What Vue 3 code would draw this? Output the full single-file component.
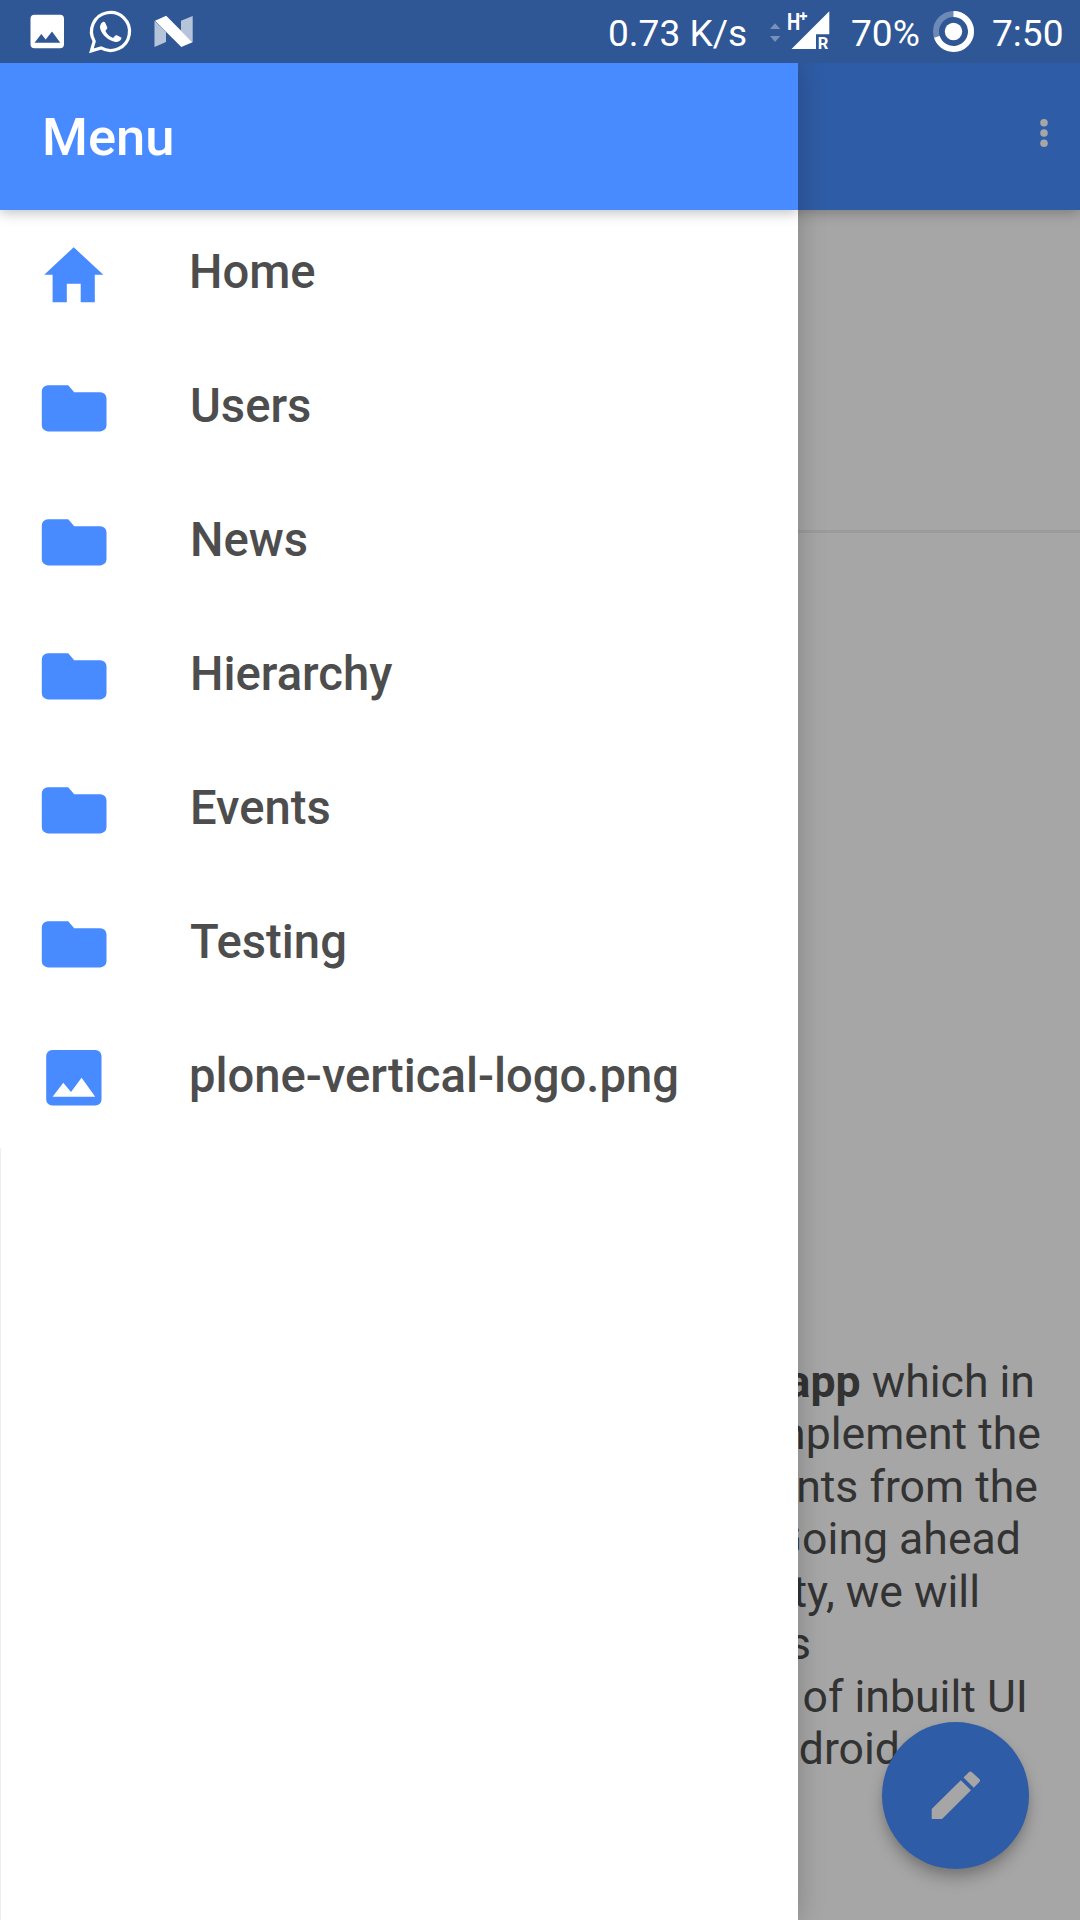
<script setup>
const items = [
  { label: 'Home', icon: 'home' },
  { label: 'Users', icon: 'folder' },
  { label: 'News', icon: 'folder' },
  { label: 'Hierarchy', icon: 'folder' },
  { label: 'Events', icon: 'folder' },
  { label: 'Testing', icon: 'folder' },
  { label: 'plone-vertical-logo.png', icon: 'image' },
]

// Each line ends at its own measured width.
const lines = [
  { strong: 'app', text: ' which in', end: 1035 },
  { text: 'mplement the', end: 1041 },
  { text: 'nts from the', end: 1038 },
  { text: 'Going ahead', end: 1021 },
  { text: 'ty, we will', end: 980 },
  { text: 's', end: 811 },
  { text: 'of inbuilt UI', end: 1028 },
  { text: 'droid', end: 900 },
]
</script>

<template>
  <div class="screen">
    <div class="status">
      <svg width="608" height="63" viewBox="0 0 608 63" fill="#fff">
        <path fill-rule="evenodd" d="M34.5 14.7H60a4 4 0 0 1 4 4V44.3a4 4 0 0 1-4 4H34.5a4 4 0 0 1-4-4V18.7a4 4 0 0 1 4-4ZM34.5 42.7H60.3L52 31.5L45.7 39.5L41.3 34Z" />
        <path d="M94.2 41.2A19 19 0 1 1 101 47.9L91.4 50.8Z" fill="none" stroke="#fff" stroke-width="3.2" />
        <path d="M102.5 22.2c1-.6 2.2-.4 2.7.6l2 4.5c.3.8-.1 1.5-.7 2.2l-1.1 1.4c1.6 3.3 4.2 5.6 7.7 7.1l2-2.3c.5-.6 1.1-.7 1.8-.4l3.8 1.9c.7.4.9.8.7 1.6-.7 2.2-3.5 3.4-6 3.1-6.8-.9-13.3-7-15.1-12.9-.8-2.8 0-5.2 2.2-6.8Z" />
        <path opacity=".65" d="M154.5 20.8L166 32V42L154.5 47ZM181 20.8L192.7 16V42.3L181 31Z" />
        <path d="M155 20.8L166.2 15.8L192.5 42.2L181.3 47Z" />
      </svg>
      <span class="speed">0.73 K/s</span>
      <svg width="83" height="63" viewBox="767 0 83 63" fill="#fff">
        <path opacity=".35" d="M770 29L775 23.3L780.3 29ZM770 36H780.3L775 42Z" />
        <path d="M791.5 49L829.3 11.3V34.3H816V49Z" />
        <text x="787" y="30" font-size="24.5" font-weight="700" textLength="13.2" lengthAdjust="spacingAndGlyphs">H</text>
        <path d="M799.5 15H802.3V12.2H804.5V15H807.2V17.3H804.5V20.1H802.3V17.3H799.5Z" />
        <text x="817.8" y="49" font-size="16.5" font-weight="700">R</text>
      </svg>
      <span>70%</span>
      <svg width="58" height="63" viewBox="932 0 58 63">
        <circle cx="953.5" cy="31.5" r="17.5" fill="none" stroke="#fff" stroke-opacity=".3" stroke-width="6" />
        <path d="M953.5 14A17.5 17.5 0 1 1 936.86 36.9" fill="none" stroke="#fff" stroke-width="6" />
        <circle cx="953.5" cy="31.5" r="8.7" fill="#fff" />
      </svg>
      <span class="clock">7:50</span>
    </div>

    <div class="body">
      <main class="page">
        <header class="toolbar">
          <svg width="12" height="34" viewBox="0 0 12 34" fill="#a6a6a6">
            <circle cx="6" cy="6.7" r="3.8" /><circle cx="6" cy="17" r="3.8" /><circle cx="6" cy="27.2" r="3.8" />
          </svg>
        </header>
        <div class="hero"></div>
        <article class="copy">
          <p v-for="(line, i) in lines" :key="i" :style="{ width: line.end + 'px' }"><span><b v-if="line.strong">{{ line.strong }}</b>{{ line.text }}</span></p>
        </article>
      </main>

      <button class="fab">
        <svg width="147" height="147" viewBox="882 1722 147 147" fill="#a6a6a6">
          <path d="M931.7 1819V1809L960.8 1780.3L971 1790.3L942 1819ZM963.5 1777.5L968.8 1772.2Q970.3 1770.8 972 1772.2L979.3 1779Q980.8 1780.4 979.3 1782L973.8 1787.7Z" />
        </svg>
      </button>

      <aside class="drawer">
        <h1>Menu</h1>
        <nav>
          <a v-for="item in items" :key="item.label" :class="item.icon">
            <svg width="182" height="134" viewBox="0 0 182 134" fill="#488aff">
              <path v-if="item.icon === 'home'" d="M73.7 37.2L103.3 64.8H94.8V92.3H80.7V73.7H66.8V92.3H52.6V64.8H44.2Z" />
              <path v-else-if="item.icon === 'folder'" d="M48 41.2H68.2L74.2 48.2H100.3a6.2 6.2 0 0 1 6.2 6.2V81.2a6.2 6.2 0 0 1-6.2 6.2H48a6.2 6.2 0 0 1-6.2-6.2V47.4a6.2 6.2 0 0 1 6.2-6.2Z" />
              <path v-else fill-rule="evenodd" d="M52.2 36H95.5a6 6 0 0 1 6 6V85.6a6 6 0 0 1-6 6H52.2a6 6 0 0 1-6-6V42a6 6 0 0 1 6-6ZM52.6 82.7H95.2L81.6 63.7L71 78L63.3 68.7Z" />
            </svg>
            <span>{{ item.label }}</span>
          </a>
        </nav>
        <div class="rest"></div>
      </aside>
    </div>
  </div>
</template>

<style>
body { margin: 0; }
</style>

<style scoped>
.screen {
  width: 1080px;
  height: 1920px;
  overflow: hidden;
  display: flex;
  flex-direction: column;
  font-family: Roboto, "Liberation Sans", sans-serif;
}
.status {
  height: 63px;
  flex: none;
  display: grid;
  grid-template-columns: 608px 159px 84px 81px 60px 1fr;
  background: #2f5695;
  color: #fff;
  font-size: 37.1px;
  line-height: 67px;
  white-space: nowrap;
}
.status svg { display: block; }
.body { flex: 1; position: relative; overflow: hidden; }
.page { height: 100%; background: #a6a6a6; display: flex; flex-direction: column; }
.toolbar {
  height: 147px;
  flex: none;
  box-sizing: border-box;
  padding: 53px 30px 0 0;
  display: flex;
  justify-content: flex-end;
  align-items: flex-start;
  background: #2f5ca6;
  box-shadow: 0 2px 13px rgba(0, 0, 0, .28);
}
.hero { height: 320px; flex: none; border-bottom: 3px solid #9b9b9b; }
.copy { padding-top: 822.6px; color: #333; font-size: 44.6px; line-height: 52.5px; }
.copy p { margin: 0; display: flex; justify-content: flex-end; white-space: pre; }
.fab {
  position: absolute;
  left: 882px;
  top: 1659px;
  width: 147px;
  height: 147px;
  padding: 0;
  border: 0;
  border-radius: 50%;
  background: #2f5ca6;
  box-shadow: 0 10px 15px rgba(0, 0, 0, .22), 0 4px 6px rgba(0, 0, 0, .08);
}
.fab svg { display: block; }
.drawer {
  position: absolute;
  left: 0;
  top: 0;
  width: 798px;
  height: 1857px;
  display: flex;
  flex-direction: column;
  background: #fff;
  box-shadow: 0 0 26px rgba(0, 0, 0, .22);
}
.drawer h1 {
  margin: 0;
  height: 147px;
  flex: none;
  box-sizing: border-box;
  padding-left: 42px;
  background: #488aff;
  color: #fff;
  font-size: 52.5px;
  font-weight: 500;
  line-height: 148px;
  box-shadow: 0 2px 13px rgba(0, 0, 0, .28);
  clip-path: inset(0 0 -30px 0);
  position: relative;
}
.drawer a {
  display: flex;
  height: 134px;
  color: #4d4d4d;
  font-size: 47.2px;
  font-weight: 500;
  line-height: 124px;
  white-space: nowrap;
}
.drawer a svg { margin-right: 7px; flex: none; }
.drawer a.folder svg { margin-right: 8px; }
.rest { flex: 1; border-left: 1px solid #efefef; }
</style>
